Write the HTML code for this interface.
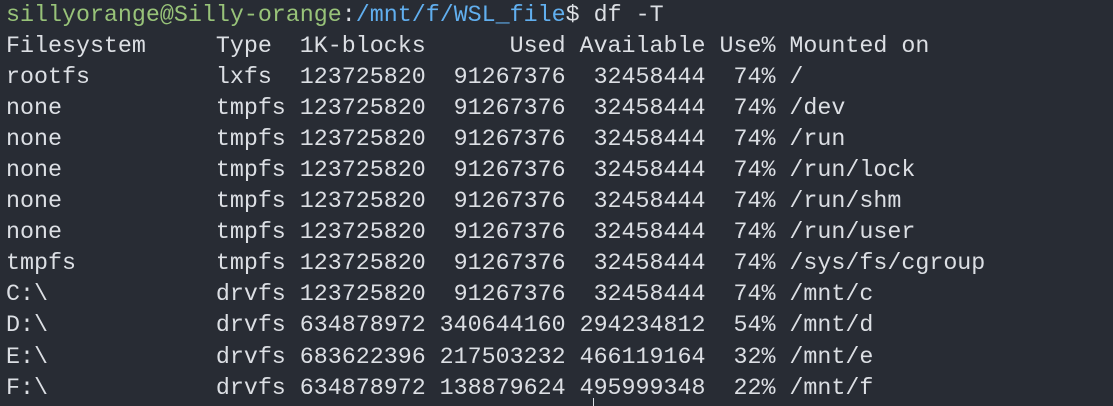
<!DOCTYPE html><html><head><style>
body{margin:0;background:#282c34;width:1113px;height:406px;overflow:hidden}
pre{margin:0;padding:0 0 0 6px;font-family:"Liberation Mono","DejaVu Sans Mono",monospace;font-size:23.32px;line-height:31.05px;color:#dcdfe4;position:relative;top:1px}
.g{color:#98c379}.b{color:#61afef}
.cur{position:absolute;left:593px;top:398px;width:1px;height:8px;background:#dcdfe4}
</style></head><body><pre><span class="g">sillyorange@Silly-orange</span>:<span class="b">/mnt/f/WSL_file</span>$ df -T
Filesystem     Type  1K-blocks      Used Available Use% Mounted on
rootfs         lxfs  123725820  91267376  32458444  74% /
none           tmpfs 123725820  91267376  32458444  74% /dev
none           tmpfs 123725820  91267376  32458444  74% /run
none           tmpfs 123725820  91267376  32458444  74% /run/lock
none           tmpfs 123725820  91267376  32458444  74% /run/shm
none           tmpfs 123725820  91267376  32458444  74% /run/user
tmpfs          tmpfs 123725820  91267376  32458444  74% /sys/fs/cgroup
C:\            drvfs 123725820  91267376  32458444  74% /mnt/c
D:\            drvfs 634878972 340644160 294234812  54% /mnt/d
E:\            drvfs 683622396 217503232 466119164  32% /mnt/e
F:\            drvfs 634878972 138879624 495999348  22% /mnt/f</pre><div class="cur"></div></body></html>
